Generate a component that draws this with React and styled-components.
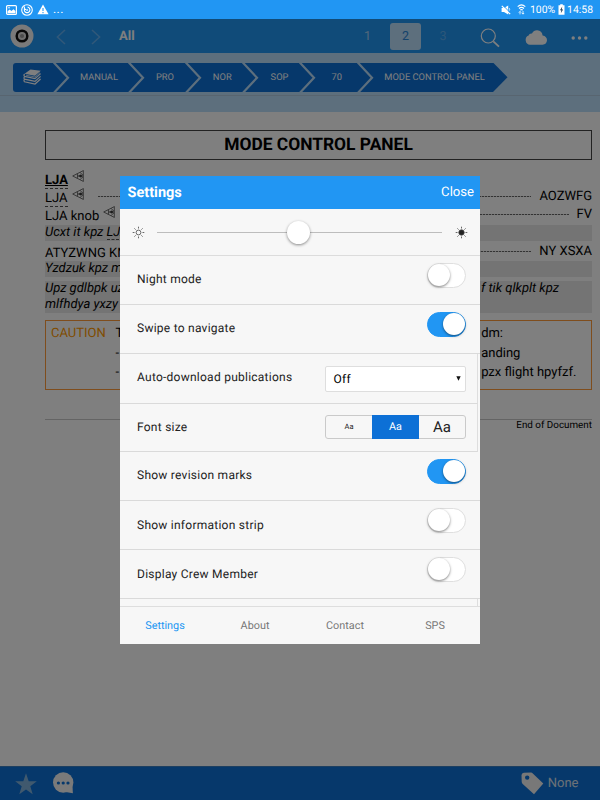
import React from 'react';
import styled, { createGlobalStyle, css } from 'styled-components';

const Global = createGlobalStyle`
  * { box-sizing: border-box; }
  body { margin: 0; background: #fff; font-family: Roboto, "Noto Sans", sans-serif; text-rendering: geometricPrecision; }
`;

const Screen = styled.div`
  width: 600px;
  height: 800px;
  display: flex;
  flex-direction: column;
  overflow: hidden;
  color: #000;
  background: #fff;
`;

/* ---------- status bar ---------- */
const StatusBar = styled.div`
  height: 19px;
  flex: none;
  background: #2196f3;
  color: #fff;
  display: flex;
  justify-content: space-between;
  padding: 0 7px 0 6px;
  font-size: 10.4px;
  line-height: 19px;
`;
const StatusGroup = styled.div`
  display: flex;
  align-items: center;
  gap: ${(p) => p.$gap}px;
`;
const Ellipsis = styled.span`
  font-size: 12px;
  line-height: 19px;
  letter-spacing: 0.4px;
`;
const BatteryWrap = styled.span`
  display: flex;
  margin: 0 2.5px 0 2.5px;
`;
const WifiWrap = styled.span`
  display: flex;
  margin: 0 4px 0 6px;
`;

/* ---------- toolbar ---------- */
const Toolbar = styled.div`
  height: 34px;
  flex: none;
  background: #2196f3;
  color: #fff;
  display: grid;
  grid-template-columns: 46px 34px 34px 235px 37px 39px 36px 58px 38px 43px;
  align-items: center;
`;
const ToolCell = styled.div`
  display: flex;
  align-items: center;
  justify-content: ${(p) => p.$justify || 'center'};
  padding-left: ${(p) => p.$pad || 0}px;
  padding-top: ${(p) => p.$drop || 0}px;
`;
const ToolTitle = styled.div`
  font-size: 13px;
  font-weight: 700;
  padding-left: 5px;
`;
const PageNumber = styled.div`
  font-size: 12.5px;
  height: 27px;
  line-height: 27px;
  width: 31px;
  margin: 0 auto;
  text-align: center;
  border-radius: 3px;
  color: ${(p) => (p.$dim ? '#5aaff2' : '#a3cff5')};
  ${(p) =>
    p.$active &&
    css`
      background: #bbdefb;
      color: #2a86d8;
    `}
`;

/* ---------- breadcrumbs ---------- */
const CrumbStrip = styled.div`
  height: 59px;
  flex: none;
  background: #bbdefb;
  display: flex;
  flex-direction: column;
`;
const CrumbArea = styled.div`
  height: 43px;
  padding: 9.5px 0 0 13px;
  border-bottom: 1px solid #b0cbe0;
`;
const CrumbBar = styled.div`
  height: 29.5px;
  width: 494.5px;
  display: flex;
  background: #0d70d6;
  border-radius: 3px 0 0 3px;
  clip-path: polygon(0 0, 480px 0, 494.5px 50%, 480px 100%, 0 100%);
`;
const Crumb = styled.div`
  width: ${(p) => p.$w}px;
  flex: none;
  display: flex;
  color: #fff;
  font-size: 9.3px;
  line-height: 29.5px;
`;
const CrumbLabel = styled.span`
  flex: 1;
  display: flex;
  align-items: center;
  justify-content: center;
  white-space: nowrap;
`;
const LastLabel = styled(CrumbLabel)`
  padding-right: 13px;
`;

/* ---------- document ---------- */
const Doc = styled.div`
  flex: 1;
  padding: 18px 8px 0 45px;
  font-size: 13px;
`;
const DocTitle = styled.div`
  height: 30px;
  border: 1px solid #444;
  font-size: 17.4px;
  line-height: 29px;
  font-weight: 700;
  text-align: center;
  margin-bottom: 12px;
`;
const Entry = styled.div`
  height: ${(p) => p.$h || 18}px;
  display: flex;
  line-height: 18px;
  white-space: nowrap;
`;
const Term = styled.span`
  height: 17px;
  font-weight: ${(p) => (p.$bold ? 700 : 400)};
  text-decoration: ${(p) => (p.$bold ? 'underline' : 'none')};
  border-bottom: 1px dashed #555;
`;
const RefMark = styled.span`
  display: flex;
  padding: 0 0 0 4px;
  margin-top: -2px;
`;
/* a one pixel row of short dashes that runs between a term and its value */
const Leader = styled.span`
  flex: 1;
  height: 1px;
  margin: 6px 8px 0 ${(p) => p.$left || 14}px;
  background: repeating-linear-gradient(90deg, #666 0 2px, #ddd 2px 3px);
`;
const Value = styled.span`
  line-height: 13px;
`;
const Note = styled.div`
  height: ${(p) => p.$h}px;
  margin-bottom: ${(p) => p.$mb}px;
  background: #e8e8e8;
  font-style: italic;
  line-height: 16px;
  display: flex;
  justify-content: space-between;
  white-space: nowrap;
`;
const NoteEnd = styled.span`
  padding-right: 33px;
`;
const NoteTerm = styled.span`
  display: inline-block;
  height: 15px;
  border-bottom: 1px dashed #555;
`;
const Caution = styled.div`
  height: 70px;
  margin-top: 7.5px;
  border: 1px solid #ff9a3a;
  display: grid;
  grid-template-columns: 64.5px 1fr auto;
  padding: 3px 14.5px 0 5px;
  line-height: 19.5px;
`;
const CautionLabel = styled.div`
  color: #ff9800;
`;
const CautionText = styled.div`
  white-space: nowrap;
`;
const DocEnd = styled.div`
  margin-top: 29px;
  border-top: 1px solid #c8c8c8;
  text-align: right;
  font-size: 9.85px;
  line-height: 12px;
`;

/* ---------- bottom bar ---------- */
const BottomBar = styled.div`
  height: 34px;
  flex: none;
  background: #0d70d6;
  border-top: 1px solid #3b7fc0;
  color: #d8e3ee;
  display: flex;
  align-items: center;
  padding: 0 21.5px 0 15px;
  font-size: 13px;
`;
const BubbleWrap = styled.div`
  display: flex;
  margin-left: 15px;
  margin-top: -1px;
  flex: 1;
`;
const TagLabel = styled.span`
  margin-left: 4px;
  margin-top: -1px;
`;

/* ---------- modal ---------- */
const Overlay = styled.div`
  position: fixed;
  inset: 19px auto auto 0;
  width: 600px;
  height: 781px;
  background: rgba(0, 0, 0, 0.5);
  padding: 156.5px 120px 0;
`;
const Modal = styled.div`
  width: 360px;
  height: 468px;
  background: #f7f7f7;
  display: flex;
  flex-direction: column;
`;
const ModalHeader = styled.div`
  height: 33.5px;
  flex: none;
  background: #2196f3;
  color: #fff;
  display: flex;
  justify-content: space-between;
  align-items: center;
  padding: 0 6px 0 7.5px;
`;
const ModalTitle = styled.span`
  font-size: 14.5px;
  font-weight: 700;
`;
const CloseButton = styled.span`
  font-size: 13.1px;
`;
const SliderRow = styled.div`
  height: 46.5px;
  flex: none;
  border-bottom: 1px solid #dcdcdc;
  display: flex;
  align-items: center;
  padding: 1.5px 12.5px 0 12px;
  justify-content: space-between;
`;
const Track = styled.div`
  width: 285px;
  height: 1px;
  background: #bdbdbd;
  display: flex;
  align-items: center;
  justify-content: center;
`;
const Thumb = styled.div`
  width: 23px;
  height: 23px;
  flex: none;
  border-radius: 50%;
  background: #fff;
  margin-right: 2px;
  box-shadow: 0 1px 3px rgba(0, 0, 0, 0.45);
`;
const SettingRow = styled.div`
  height: ${(p) => p.$h || 49}px;
  flex: none;
  border-bottom: 1px solid #dadada;
  display: flex;
  justify-content: space-between;
  padding: 0 ${(p) => (p.$scroll ? 11 : 14)}px 0 17px;
  ${(p) =>
    p.$scroll &&
    css`
      margin-right: 2px;
      border-right: 1px solid #dedede;
    `}
`;
const Label = styled.span`
  font-size: 12px;
  letter-spacing: 0.25px;
  line-height: ${(p) => p.$lh || 48}px;
  color: #222;
  white-space: nowrap;
`;
const Switch = styled.span`
  width: 39.5px;
  height: 24.5px;
  margin-top: 7.5px;
  border-radius: 13px;
  border: 1px solid ${(p) => (p.$on ? '#2196f3' : '#dfdfdf')};
  background: ${(p) => (p.$on ? '#2196f3' : '#fff')};
  display: flex;
  align-items: center;
  justify-content: ${(p) => (p.$on ? 'flex-end' : 'flex-start')};
`;
const Knob = styled.span`
  width: 22px;
  height: 22px;
  border-radius: 50%;
  background: #fff;
  box-shadow: 0 1px 2.5px rgba(0, 0, 0, 0.5);
`;
const Select = styled.div`
  width: 141px;
  height: 26.5px;
  margin-top: 12px;
  border: 1px solid #dedede;
  border-radius: 2px;
  background: #fff;
  display: flex;
  align-items: center;
  justify-content: space-between;
  padding: 0 4.5px 0 7.5px;
  font-size: 12px;
  letter-spacing: 0.24px;
`;
const Segments = styled.div`
  width: 141px;
  height: 24px;
  margin-top: 11.5px;
  border: 1px solid #cacaca;
  border-radius: 3px;
  display: grid;
  grid-template-columns: 46px 47px 46px;
`;
const Segment = styled.span`
  font-size: ${(p) => p.$size}px;
  line-height: 22px;
  text-align: center;
  color: #222;
  ${(p) =>
    p.$active &&
    css`
      background: #0d70d6;
      color: #fff;
      margin: -1px 0;
      line-height: 24px;
    `}
`;
const ListTail = styled.div`
  flex: 1;
  margin: 0 2px 0 0;
  border-right: 1px solid #dedede;
`;
const Tabs = styled.div`
  height: 38px;
  flex: none;
  border-top: 1px solid #dedede;
  display: grid;
  grid-template-columns: repeat(4, 1fr);
`;
const Tab = styled.span`
  font-size: 10.85px;
  line-height: 37px;
  text-align: center;
  color: ${(p) => (p.$active ? '#2196f3' : '#777')};
`;

/* ---------- icons ---------- */
const PictureIcon = () => (
  <svg width="11" height="10" viewBox="0 0 11 10">
    <rect x="0.6" y="0.6" width="9.8" height="8.8" rx="1" fill="none" stroke="#fff" strokeWidth="1.2" />
    <path d="M1.6 8.2V6.3L3.6 4.5L5.4 6L7.5 4.2L9.4 6V8.2Z" fill="#fff" />
    <circle cx="3" cy="2.8" r="0.8" fill="#fff" />
  </svg>
);
const SyncIcon = () => (
  <svg width="12" height="12" viewBox="0 0 12 12" fill="none" stroke="#fff">
    <circle cx="6" cy="6" r="5.3" strokeWidth="1.1" />
    <path d="M3.4 5.2A2.8 2.8 0 1 0 6.6 3.1M3.4 2.6V5.4H5" strokeWidth="1.1" />
    <circle cx="6.1" cy="6" r="0.7" fill="#fff" strokeWidth="0.4" />
  </svg>
);
const WarningIcon = () => (
  <svg width="12" height="11" viewBox="0 0 12 11">
    <path d="M6 0.5L11.6 10.3H0.4Z" fill="#fff" />
    <path d="M6 4V7M6 8V9.2" stroke="#2196f3" strokeWidth="1.1" />
  </svg>
);
const MuteIcon = () => (
  <svg width="10" height="10" viewBox="0 0 10 10">
    <path d="M0.6 3H3L7.2 0.4V9.4L3 6.9H0.6Z" fill="#fff" />
    <path d="M1.6 0L9.8 8.4" stroke="#2196f3" strokeWidth="1" />
    <path d="M0.8 0.8L9.2 9.2" stroke="#fff" strokeWidth="1.2" />
    <path d="M8.3 3.2Q9 4.4 8.4 5.6" stroke="#fff" strokeWidth="0.8" fill="none" />
  </svg>
);
const WifiIcon = () => (
  <svg width="9" height="11" viewBox="0 0 9 11" fill="none" stroke="#fff" strokeWidth="1.1">
    <path d="M0.7 2.6Q4.5 -1 8.3 2.6M2 4.5Q4.5 2.1 7 4.5M3.2 6.2Q4.5 5 5.8 6.2" />
    <path d="M3 10.4V7.5M1.8 8.6L3 7.4L4.2 8.6M6 7V10M4.9 9L6 10.2L7.1 9" strokeWidth="0.8" />
  </svg>
);
const BatteryIcon = () => (
  <svg width="7" height="11" viewBox="0 0 7 11">
    <path d="M2.2 0.3H4.8V1.3H6.5V10.7H0.5V1.3H2.2Z" fill="#fff" />
    <path d="M4.3 2.6L2 6.2H3.4L2.8 9.2L5.1 5.4H3.7Z" fill="#14324a" />
  </svg>
);
const Logo = () => (
  <svg width="24" height="24" viewBox="0 0 24 24">
    <circle cx="12" cy="12" r="11.5" fill="#f4f4f4" />
    <circle cx="12" cy="12" r="5.3" fill="#ddd" stroke="#111" strokeWidth="2.5" />
    <circle cx="12" cy="12" r="2.1" fill="#999" />
  </svg>
);
const Arrow = ({ right }) => (
  <svg width="10" height="16" viewBox="0 0 10 16" fill="none" stroke="#62b1f2" strokeWidth="1.5">
    <path d={right ? 'M1 1L8.6 8L1 15' : 'M9 1L1.4 8L9 15'} />
  </svg>
);
const SearchIcon = () => (
  <svg width="20" height="20" viewBox="0 0 20 20" fill="none" stroke="#fff">
    <circle cx="8.3" cy="8" r="7" strokeWidth="1.2" />
    <path d="M13.3 13.3L19 18.7" strokeWidth="1.8" />
  </svg>
);
const CloudIcon = () => (
  <svg width="22" height="15" viewBox="0 0 22 15">
    <path
      d="M5 14.8A4.8 4.8 0 0 1 3.6 5.6Q4.3 3.1 7 3.5Q8.7 0.2 12.2 0.3Q17 0.6 17.6 5.4Q22 6.2 22 10.3Q21.7 14.5 17.5 14.8Z"
      fill="#fff"
    />
  </svg>
);
const DotsIcon = () => (
  <svg width="17" height="4" viewBox="0 0 17 4" fill="#fff">
    <circle cx="2.2" cy="2" r="1.7" />
    <circle cx="8.5" cy="2" r="1.7" />
    <circle cx="14.8" cy="2" r="1.7" />
  </svg>
);
const BooksIcon = () => (
  <svg width="19" height="16" viewBox="0 0 19 16">
    <path d="M7.5 0.5L17.8 1.8L12 6.8L1.6 4.8Z" fill="#fff" />
    <path
      d="M1.6 5Q0.4 6.2 1.5 7.4L12 9.6L17.6 4.6M1.3 8Q0.6 9.2 1.5 10.2L12 12.4L17.6 7.4M1.3 10.6Q0.6 11.8 1.5 12.8L12 15L17.6 10"
      fill="none"
      stroke="#fff"
      strokeWidth="1.2"
    />
    <path d="M3 6.2L12 8L17 3.6" fill="none" stroke="#fff" strokeWidth="0.7" />
  </svg>
);
const CrumbChevron = () => (
  <svg width="18" height="30" viewBox="0 0 18 30">
    <path d="M0.3 -1L15 14.75L0.3 30.5" fill="none" stroke="#bbdefb" strokeWidth="2.2" />
  </svg>
);
const EyeMark = () => (
  <svg width="12" height="12" viewBox="0 0 12 12" fill="none" stroke="#333" strokeWidth="0.7">
    <path d="M11.3 0.7V11.3M11.5 0.5L0.7 6L11.5 11.5M5 6H11M5.2 3.8Q6.6 6 5.2 8.2M8.2 2.6L11 5.2M8.2 9.4L11 6.8" />
    <circle cx="8.6" cy="6" r="1.1" fill="#333" />
  </svg>
);
const StarIcon = () => (
  <svg width="22" height="22" viewBox="0 0 22 22">
    <path d="M11 0.3L13.7 8.2H21.8L15.3 13.2L17.7 21.3L11 16.5L4.3 21.3L6.7 13.2L0.2 8.2H8.3Z" fill="#80b3dc" />
  </svg>
);
const BubbleIcon = () => (
  <svg width="23" height="22" viewBox="0 0 23 22">
    <circle cx="11.2" cy="10.5" r="10.2" fill="#f4f4f4" />
    <path d="M20.5 14L20.9 21.3L13.5 20Z" fill="#f4f4f4" />
    <g fill="#0d70d6">
      <circle cx="6.4" cy="11" r="1.6" />
      <circle cx="11.2" cy="11" r="1.6" />
      <circle cx="16" cy="11" r="1.6" />
    </g>
  </svg>
);
const TagIcon = () => (
  <svg width="23" height="23" viewBox="0 0 23 23">
    <path
      fillRule="evenodd"
      d="M2.8 0.8L10 0.5Q11 0.6 11.8 1.4L22.3 11.6L13 22.3L1.7 12Q0.8 11.2 0.7 9.8L0.5 3Q0.8 1 2.8 0.8ZM6.2 3.4A2.2 2.2 0 1 0 6.2 7.8A2.2 2.2 0 1 0 6.2 3.4Z"
      fill="#f0f0f0"
    />
  </svg>
);
const Sun = ({ filled }) => (
  <svg width="13" height="13" viewBox="0 0 13 13" stroke="#444" strokeWidth="0.8">
    <circle cx="6.5" cy="6.5" r={filled ? 2.7 : 2.4} fill={filled ? '#222' : 'none'} />
    <path d="M6.5 0.7V2.5M6.5 10.5V12.3M0.7 6.5H2.5M10.5 6.5H12.3M2.4 2.4L3.6 3.6M9.4 9.4L10.6 10.6M2.4 10.6L3.6 9.4M9.4 3.6L10.6 2.4" />
  </svg>
);
const Caret = () => (
  <svg width="5" height="5" viewBox="0 0 5 5">
    <path d="M0.3 0.3H4.7L2.5 4.8Z" fill="#111" />
  </svg>
);

const crumbs = [
  ['MANUAL', 75],
  ['PRO', 57],
  ['NOR', 57.5],
  ['SOP', 57],
  ['70', 57.5],
];

const Toggle = ({ on }) => (
  <Switch $on={on}>
    <Knob />
  </Switch>
);

export default function App() {
  return (
    <>
      <Global />
      <Screen>
        <StatusBar>
          <StatusGroup $gap={4}>
            <PictureIcon />
            <SyncIcon />
            <WarningIcon />
            <Ellipsis>...</Ellipsis>
          </StatusGroup>
          <StatusGroup $gap={0}>
            <MuteIcon />
            <WifiWrap>
              <WifiIcon />
            </WifiWrap>
            100%
            <BatteryWrap>
              <BatteryIcon />
            </BatteryWrap>
            14:58
          </StatusGroup>
        </StatusBar>

        <Toolbar>
          <ToolCell $justify="flex-start" $pad={9.5}>
            <Logo />
          </ToolCell>
          <ToolCell $justify="flex-start" $pad={10} $drop={2}>
            <Arrow />
          </ToolCell>
          <ToolCell $justify="flex-start" $pad={10.5} $drop={2}>
            <Arrow right />
          </ToolCell>
          <ToolTitle>All</ToolTitle>
          <PageNumber>1</PageNumber>
          <PageNumber $active>2</PageNumber>
          <PageNumber $dim>3</PageNumber>
          <ToolCell $drop={3}>
            <SearchIcon />
          </ToolCell>
          <ToolCell $justify="flex-start" $pad={6} $drop={3}>
            <CloudIcon />
          </ToolCell>
          <ToolCell $justify="flex-start" $pad={14} $drop={3}>
            <DotsIcon />
          </ToolCell>
        </Toolbar>

        <CrumbStrip>
          <CrumbArea>
            <CrumbBar>
              <Crumb $w={57.5}>
                <CrumbLabel>
                  <BooksIcon />
                </CrumbLabel>
                <CrumbChevron />
              </Crumb>
              {crumbs.map(([name, w]) => (
                <Crumb key={name} $w={w}>
                  <CrumbLabel>{name}</CrumbLabel>
                  <CrumbChevron />
                </Crumb>
              ))}
              <Crumb $w={133}>
                <LastLabel>MODE CONTROL PANEL</LastLabel>
              </Crumb>
            </CrumbBar>
          </CrumbArea>
        </CrumbStrip>

        <Doc>
          <DocTitle>MODE CONTROL PANEL</DocTitle>
          <Entry>
            <Term $bold>LJA</Term>
            <RefMark>
              <EyeMark />
            </RefMark>
          </Entry>
          <Entry>
            <Term>LJA</Term>
            <RefMark>
              <EyeMark />
            </RefMark>
            <Leader />
            <Value>AOZWFG</Value>
          </Entry>
          <Entry $h={17}>
            LJA knob
            <RefMark>
              <EyeMark />
            </RefMark>
            <Leader />
            <Value>FV</Value>
          </Entry>
          <Note $h={15.5} $mb={4}>
            <span>
              Ucxt it kpz <NoteTerm>LJA</NoteTerm>
            </span>
          </Note>
          <Entry $h={16}>
            ATYZWNG KNOB
            <Leader />
            <Value>NY XSXA</Value>
          </Entry>
          <Note $h={16} $mb={4}>
            Yzdzuk kpz mlf
          </Note>
          <Note $h={32} $mb={0}>
            <span>
              Upz gdlbpk uzx
              <br />
              mlfhdya yxzy
            </span>
            <NoteEnd>f tik qlkplt kpz</NoteEnd>
          </Note>
          <Caution>
            <CautionLabel>CAUTION</CautionLabel>
            <CautionText>
              T
              <br />
              -
              <br />
              -
            </CautionText>
            <CautionText>
              dm:
              <br />
              anding
              <br />
              pzx flight hpyfzf.
            </CautionText>
          </Caution>
          <DocEnd>End of Document</DocEnd>
        </Doc>

        <BottomBar>
          <StarIcon />
          <BubbleWrap>
            <BubbleIcon />
          </BubbleWrap>
          <TagIcon />
          <TagLabel>None</TagLabel>
        </BottomBar>
      </Screen>

      <Overlay>
        <Modal>
          <ModalHeader>
            <ModalTitle>Settings</ModalTitle>
            <CloseButton>Close</CloseButton>
          </ModalHeader>
          <SliderRow>
            <Sun />
            <Track>
              <Thumb />
            </Track>
            <Sun filled />
          </SliderRow>
          <SettingRow>
            <Label $lh={47}>Night mode</Label>
            <Toggle />
          </SettingRow>
          <SettingRow>
            <Label $lh={47}>Swipe to navigate</Label>
            <Toggle on />
          </SettingRow>
          <SettingRow $h={50} $scroll>
            <Label $lh={47}>Auto-download publications</Label>
            <Select>
              Off
              <Caret />
            </Select>
          </SettingRow>
          <SettingRow $h={48} $scroll>
            <Label $lh={46}>Font size</Label>
            <Segments>
              <Segment $size={7.5}>Aa</Segment>
              <Segment $size={10.8} $active>
                Aa
              </Segment>
              <Segment $size={15}>Aa</Segment>
            </Segments>
          </SettingRow>
          <SettingRow>
            <Label $lh={47}>Show revision marks</Label>
            <Toggle on />
          </SettingRow>
          <SettingRow>
            <Label>Show information strip</Label>
            <Toggle />
          </SettingRow>
          <SettingRow>
            <Label>Display Crew Member</Label>
            <Toggle />
          </SettingRow>
          <ListTail />
          <Tabs>
            <Tab $active>Settings</Tab>
            <Tab>About</Tab>
            <Tab>Contact</Tab>
            <Tab>SPS</Tab>
          </Tabs>
        </Modal>
      </Overlay>
    </>
  );
}
